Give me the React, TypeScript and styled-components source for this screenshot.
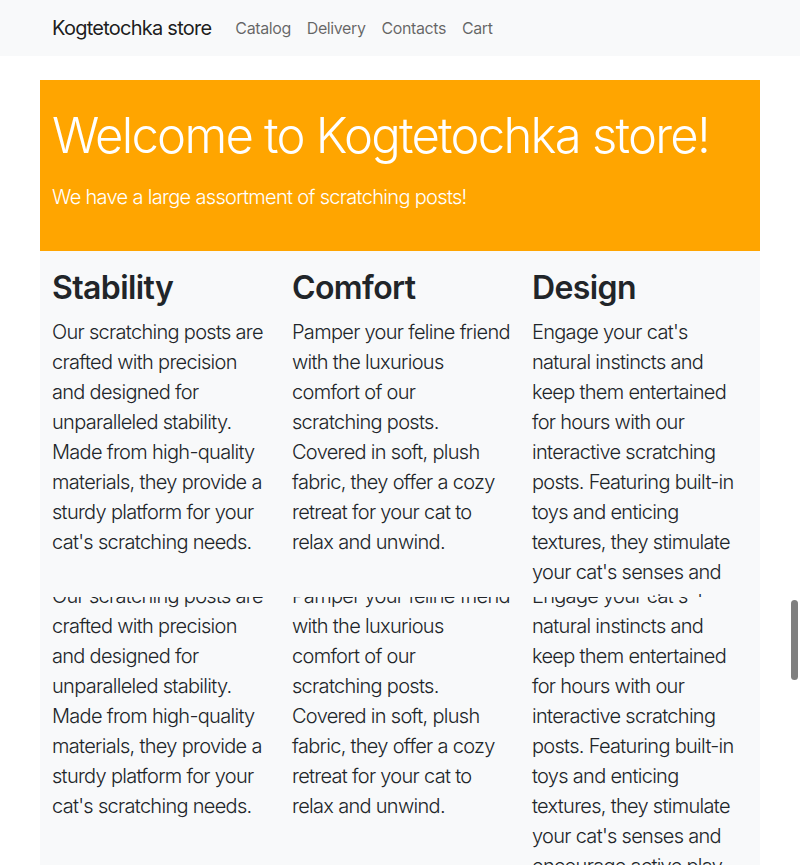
import React from "react";
import styled, { createGlobalStyle } from "styled-components";

const Global = createGlobalStyle`
  * { box-sizing: border-box; }
  html, body { margin: 0; padding: 0; }
  body {
    font-family: Inter, "Noto Sans", "Liberation Sans", sans-serif;
    color: #212529;
    background: #fff;
    overflow: hidden;
    height: 865px;
  }
`;

const Page = styled.div`
  position: relative;
  width: 800px;
  height: 865px;
  overflow: hidden;
`;

const Navbar = styled.nav`
  background: #f8f9fa;
  height: 56px;
`;

const NavInner = styled.div`
  width: 720px;
  margin: 0 auto;
  padding: 0 12px;
  height: 100%;
  display: flex;
  align-items: center;
`;

const Brand = styled.a`
  font-size: 20px;
  letter-spacing: -0.75px;
  color: rgba(0, 0, 0, 0.9);
  margin-right: 16px;
  text-decoration: none;
`;

const NavLink = styled.a`
  font-size: 16px;
  letter-spacing: -0.4px;
  color: rgba(0, 0, 0, 0.6);
  padding: 0 8px;
  text-decoration: none;
`;

const Container = styled.main`
  width: 720px;
  margin: 24px auto 0;
`;

const Hero = styled.section`
  background: #ffa500;
  color: #fff;
  padding: 27px 12px 0;
  height: 171px;
`;

const HeroTitle = styled.h1`
  margin: 0 0 16px;
  font-size: 49px;
  font-weight: 300;
  letter-spacing: -1.75px;
  line-height: 1.2;
`;

const Lead = styled.p`
  margin: 0;
  font-size: 20px;
  font-weight: 300;
  letter-spacing: -0.68px;
  line-height: 1.5;
`;

const Panel = styled.div<{ $h: number }>`
  background: #f8f9fa;
  overflow: hidden;
  height: ${(p) => p.$h}px;
`;

const Row = styled.div<{ $shift?: number }>`
  display: grid;
  grid-template-columns: repeat(3, 1fr);
  padding-top: 18px;
  margin-top: ${(p) => -(p.$shift || 0)}px;
`;

const Col = styled.div`
  padding: 0 10px 0 12px;
`;

const Heading = styled.h2`
  margin: 0 0 10px;
  font-size: 32px;
  font-weight: 600;
  letter-spacing: -0.6px;
  line-height: 1.2;
  color: #212529;
`;

const Text = styled.p`
  margin: 0;
  font-size: 20px;
  font-weight: 300;
  letter-spacing: -0.7px;
  line-height: 30px;
  color: #212529;
`;

const Scrollbar = styled.div`
  position: absolute;
  left: 791px;
  top: 600px;
  width: 7px;
  height: 80px;
  border-radius: 4px;
  background: #7f7f7f;
`;

const features = [
  {
    title: "Stability",
    text: "Our scratching posts are crafted with precision and designed for unparalleled stability. Made from high-quality materials, they provide a sturdy platform for your cat's scratching needs.",
  },
  {
    title: "Comfort",
    text: "Pamper your feline friend with the luxurious comfort of our scratching posts. Covered in soft, plush fabric, they offer a cozy retreat for your cat to relax and unwind.",
  },
  {
    title: "Design",
    text: "Engage your cat's natural instincts and keep them entertained for hours with our interactive scratching posts. Featuring built-in toys and enticing textures, they stimulate your cat's senses and encourage active play.",
  },
];

const Features = ({ shift }: { shift?: number }) => (
  <Row $shift={shift}>
    {features.map((f) => (
      <Col key={f.title}>
        <Heading>{f.title}</Heading>
        <Text>{f.text}</Text>
      </Col>
    ))}
  </Row>
);

export default function App() {
  return (
    <Page>
      <Global />
      <Navbar>
        <NavInner>
          <Brand href="#">Kogtetochka store</Brand>
          <NavLink href="#">Catalog</NavLink>
          <NavLink href="#">Delivery</NavLink>
          <NavLink href="#">Contacts</NavLink>
          <NavLink href="#">Cart</NavLink>
        </NavInner>
      </Navbar>
      <Container>
        <Hero>
          <HeroTitle>Welcome to Kogtetochka store!</HeroTitle>
          <Lead>We have a large assortment of scratching posts!</Lead>
        </Hero>
        <Panel $h={346}>
          <Features />
        </Panel>
        <Panel $h={300}>
          <Features shift={82} />
        </Panel>
      </Container>
      <Scrollbar />
    </Page>
  );
}
